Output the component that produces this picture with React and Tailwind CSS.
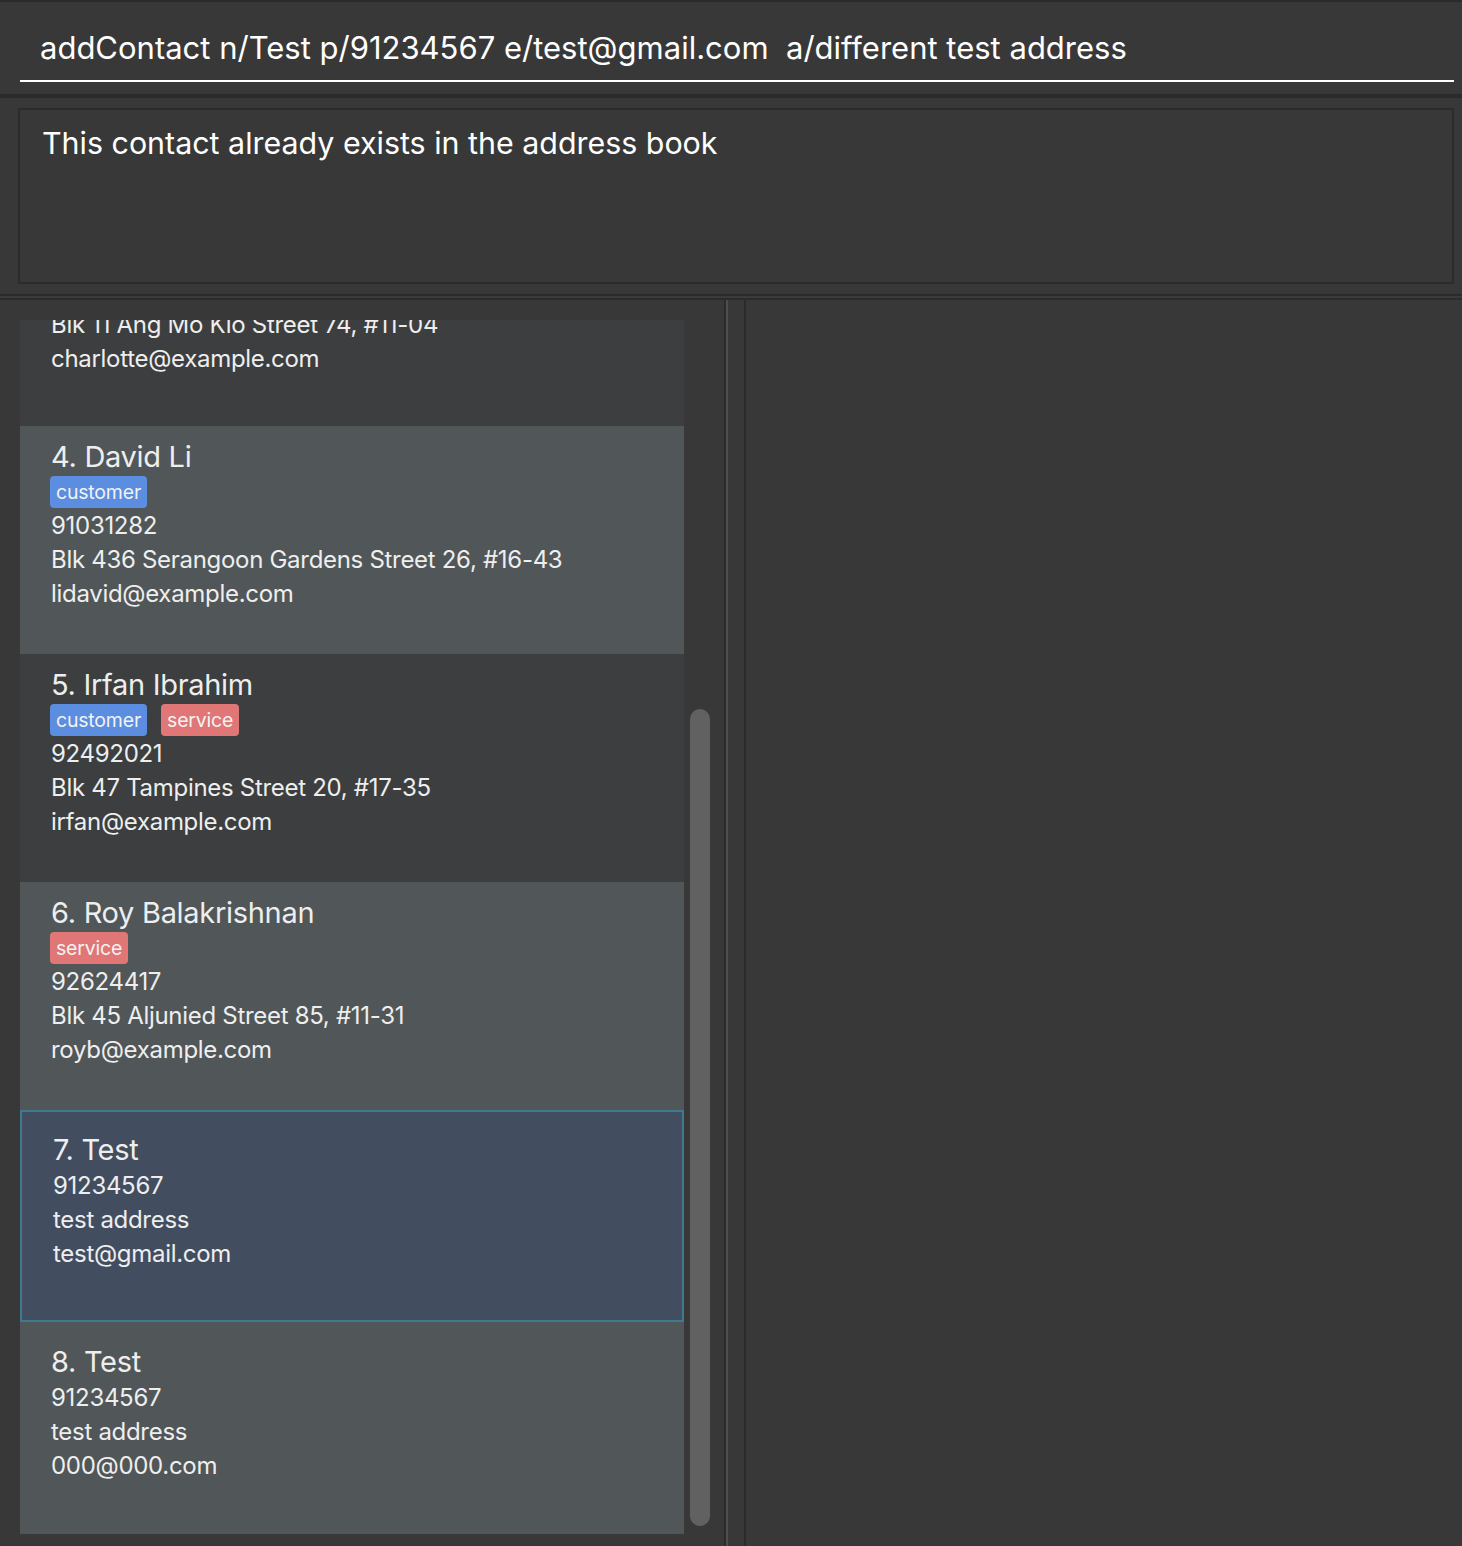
import React from 'react';

// list is scrolled: card 3 only shows its last two lines
const contacts = [
  { id: 4, name: 'David Li', phone: '91031282', address: 'Blk 436 Serangoon Gardens Street 26, #16-43', email: 'lidavid@example.com', tags: ['customer'] },
  { id: 5, name: 'Irfan Ibrahim', phone: '92492021', address: 'Blk 47 Tampines Street 20, #17-35', email: 'irfan@example.com', tags: ['customer', 'service'] },
  { id: 6, name: 'Roy Balakrishnan', phone: '92624417', address: 'Blk 45 Aljunied Street 85, #11-31', email: 'royb@example.com', tags: ['service'] },
  { id: 7, name: 'Test', phone: '91234567', address: 'test address', email: 'test@gmail.com', tags: [], selected: true },
  { id: 8, name: 'Test', phone: '91234567', address: 'test address', email: '000@000.com', tags: [] },
];

const tagColors = {
  customer: 'bg-[#5b8de0]',
  service: 'bg-[#e07676]',
};

const detail = 'text-[24px] leading-[34px] tracking-[-0.3px]';

const ContactCard = ({ contact }) => {
  const hasTags = contact.tags.length > 0;
  let bg = contact.id % 2 === 0 ? 'bg-[#515658]' : 'bg-[#3c3e3f]';
  if (contact.selected) bg = 'bg-[#424d5f] border-2 border-[#3e7b91]';

  return (
    <div className={`${bg} pl-[31px] ${hasTags ? 'h-[228px] pt-[13px]' : 'h-[212px] pt-[22px]'} flex flex-col text-[#eeeeee]`}>
      <div className={`text-[29px] leading-[36px] tracking-[-0.3px] ${contact.selected ? '-mt-[2px]' : ''}`}>{contact.id}. {contact.name}</div>
      {hasTags && (
        <div className="flex gap-[14px] mt-[1px] -ml-[1px]">
          {contact.tags.map(tag => (
            <span key={tag} className={`${tagColors[tag]} h-[32px] px-[6px] rounded-[4px] text-[19.5px] leading-[32px] tracking-[-0.2px] text-[#f2f2f2]`}>{tag}</span>
          ))}
        </div>
      )}
      <div className={`${detail} ${hasTags ? 'mt-[1px]' : 'mt-[1px]'}`}>{contact.phone}</div>
      <div className={detail}>{contact.address}</div>
      <div className={detail}>{contact.email}</div>
    </div>
  );
};

const App = () => {
  return (
    <div className="w-[1462px] h-[1546px] bg-[#383838] flex flex-col overflow-hidden" style={{ fontFamily: 'Inter, "Noto Sans", sans-serif' }}>
      {/* command box */}
      <div className="h-[2px] bg-[#2b2b2b]" />
      <div className="h-[92px] pl-[20px] pr-[8px] flex flex-col">
        <div className="h-[80px] flex items-end pb-[14px] pl-[20px] border-b-2 border-white text-white text-[31px] leading-[36px] whitespace-pre">
          addContact n/Test p/91234567 e/test@gmail.com  a/different test address
        </div>
      </div>
      <div className="h-[4px] bg-[#2b2b2b]" />

      {/* result display */}
      <div className="h-[196px] pt-[10px] pb-[10px] pl-[18px] pr-[8px]">
        <div className="h-full border-2 border-[#2b2b2b] pl-[22px] pt-[15px] text-white text-[30.4px] leading-[36px]">
          This contact already exists in the address book
        </div>
      </div>
      <div className="h-[2px] bg-[#2b2b2b]" />
      <div className="h-[2px] bg-[#3a3a3a]" />
      <div className="h-[2px] bg-[#2b2b2b]" />

      {/* lower split */}
      <div className="flex-1 flex min-h-0">
        <div className="w-[724px] flex pt-[20px] pl-[20px] min-h-0">
          <div className="w-[664px] h-full overflow-hidden flex flex-col">
            <div className="h-[106px] shrink-0 overflow-hidden bg-[#3c3e3f] pl-[31px] text-[#eeeeee]">
              <div className="-mt-[12px]">
                <div className={detail}>Blk 11 Ang Mo Kio Street 74, #11-04</div>
                <div className={detail}>charlotte@example.com</div>
              </div>
            </div>
            {contacts.map(c => <ContactCard key={c.id} contact={c} />)}
          </div>
          <div className="w-[40px] pl-[6px]">
            <div className="w-[20px] h-[817px] mt-[389px] rounded-full bg-[#616161]" />
          </div>
        </div>
        <div className="w-[2px] bg-[#2b2b2b]" />
        <div className="w-[2px] bg-[#4e4e4e]" />
        <div className="w-[16px]" />
        <div className="w-[2px] bg-[#2b2b2b]" />
        <div className="flex-1" />
      </div>
    </div>
  );
};

export default App;
